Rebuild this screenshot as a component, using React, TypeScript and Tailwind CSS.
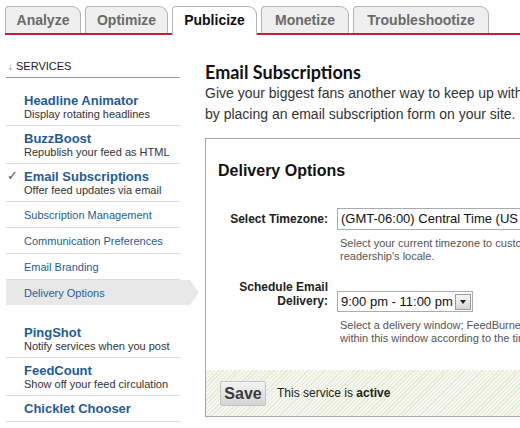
import React from "react";

type Tab = { label: string; width: string; active?: boolean };

const tabs: Tab[] = [
  { label: "Analyze", width: "w-[76px]" },
  { label: "Optimize", width: "w-[83px]" },
  { label: "Publicize", width: "w-[85px]", active: true },
  { label: "Monetize", width: "w-[88px]" },
  { label: "Troubleshootize", width: "w-[136px]" },
];

function TabBar() {
  return (
    <div className="ml-[5px] mt-[6px] flex items-end gap-[4px] border-b-2 border-[#cc1a3d]">
      {tabs.map((t) => (
        <div
          key={t.label}
          className={
            t.active
              ? `${t.width} -mb-[2px] flex h-[29px] items-center justify-center rounded-tl-[4px] rounded-tr-[9px] border border-b-0 border-[#b4b4b4] bg-white pb-[2px] text-[14px] font-bold text-[#111]`
              : `${t.width} flex h-[27px] items-center justify-center rounded-tl-[4px] rounded-tr-[9px] border border-b-0 border-[#b4b4b4] bg-[#efefef] text-[14px] font-bold text-[#6a6a6a]`
          }
        >
          {t.label}
        </div>
      ))}
    </div>
  );
}

function Service({
  title,
  desc,
  checked,
  last,
}: {
  title: string;
  desc?: string;
  checked?: boolean;
  last?: boolean;
}) {
  return (
    <div className={`relative pl-[18px] pt-[6px] pb-[5px] ${last ? "" : "border-b border-[#dcdcdc]"}`}>
      {checked && (
        <span className="absolute left-[1px] top-[5px] text-[13px] leading-[14px] text-[#555]">✓</span>
      )}
      <div className="text-[13px] font-bold leading-[14px] text-[#1f5b97]">{title}</div>
      {desc && <div className="text-[11px] leading-[12px] text-[#333]">{desc}</div>}
    </div>
  );
}

function SubLink({ label, active }: { label: string; active?: boolean }) {
  if (active) {
    return (
      <div className="w-[193px] bg-[#e8e8e8] pl-[18px] pt-[6px] pb-[5px] text-[11px] leading-[14px] text-[#2a5d93] [clip-path:polygon(0_0,calc(100%-9px)_0,100%_50%,calc(100%-9px)_100%,0_100%)]">
        {label}
      </div>
    );
  }
  return (
    <div className="border-b border-[#dcdcdc] pl-[18px] pt-[6px] pb-[5px] text-[11px] leading-[14px] text-[#2a5d93]">
      {label}
    </div>
  );
}

function Sidebar() {
  return (
    <div className="w-[200px] shrink-0 pl-[6px]">
      <div className="mt-[24px] w-[174px] border-b border-[#999] pb-[3px] pl-[2px] text-[11px] leading-[14px] text-[#1a1a1a]">
        <span className="mr-[3px] text-[10px] text-[#777]">↓</span>SERVICES
      </div>
      <div className="mt-[10px] w-[174px]">
        <Service title="Headline Animator" desc="Display rotating headlines" />
        <Service title="BuzzBoost" desc="Republish your feed as HTML" />
        <Service title="Email Subscriptions" desc="Offer feed updates via email" checked />
        <SubLink label="Subscription Management" />
        <SubLink label="Communication Preferences" />
        <SubLink label="Email Branding" />
      </div>
      <SubLink label="Delivery Options" active />
      <div className="mt-[15px] w-[174px]">
        <Service title="PingShot" desc="Notify services when you post" />
        <Service title="FeedCount" desc="Show off your feed circulation" />
        <Service title="Chicklet Chooser" />
      </div>
    </div>
  );
}

function DeliveryBox() {
  return (
    <div className="mt-[13px] w-[400px] border border-[#a8a8a8]">
      <div className="px-[12px] pt-[22px]">
        <h2 className="text-[16px] font-bold leading-[20px] text-[#111]">Delivery Options</h2>

        {/* timezone row */}
        <div className="mt-[27px] flex items-center gap-[9px]">
          <div className="w-[110px] shrink-0 text-right text-[12px] font-bold text-[#222]">Select Timezone:</div>
          <div className="flex h-[22px] w-[250px] items-center whitespace-nowrap border border-[#a5acb2] bg-white pl-[3px] text-[13px] text-[#111]">
            (GMT-06:00) Central Time (US &amp; Canada)
          </div>
        </div>
        <p className="ml-[122px] mt-[7px] whitespace-nowrap text-[11px] leading-[13px] text-[#555]">
          Select your current timezone to customize delivery to your
          <br />
          readership's locale.
        </p>

        {/* delivery window row */}
        <div className="mt-[17px] flex items-start gap-[9px]">
          <div className="w-[110px] shrink-0 text-right text-[12px] font-bold leading-[14px] text-[#222]">
            Schedule Email
            <br />
            Delivery:
          </div>
          <div className="mt-[11px] flex h-[21px] w-[136px] items-center justify-between whitespace-nowrap border border-[#a5acb2] bg-white pl-[3px] pr-[1px] text-[13px] text-[#111]">
            <span>9:00 pm - 11:00 pm</span>
            <span className="flex h-[16px] w-[16px] items-center justify-center border border-[#9a9a9a] bg-gradient-to-b from-[#f6f6f6] to-[#d6d6d6]">
              <span className="h-0 w-0 border-x-[3px] border-t-[4px] border-x-transparent border-t-[#222]" />
            </span>
          </div>
        </div>
        <p className="ml-[122px] mt-[7px] whitespace-nowrap text-[11px] leading-[13px] text-[#555]">
          Select a delivery window; FeedBurner will send your email
          <br />
          within this window according to the timezone above.
        </p>
      </div>

      {/* save footer */}
      <div className="mt-[25px] flex h-[46px] items-center gap-[11px] bg-[repeating-linear-gradient(135deg,#e3ead6_0px,#e3ead6_1px,#f5f7ee_1px,#f5f7ee_3px)] pl-[14px]">
        <button className="h-[25px] w-[46px] rounded-[2px] border border-[#c4c4c4] bg-gradient-to-b from-[#f4f4f4] to-[#d4d4d4] text-[16px] font-bold text-[#3a3a3a]">
          Save
        </button>
        <span className="text-[12px] text-[#222]">
          This service is <b>active</b>
        </span>
      </div>
    </div>
  );
}

export default function App() {
  return (
    <div className="h-[428px] w-[520px] overflow-hidden bg-white font-['Liberation_Sans',Arial,sans-serif]">
      <TabBar />
      <div className="flex">
        <Sidebar />
        <div className="ml-[5px] w-[400px] shrink-0">
          <h1 className="mt-[26px] font-['Lato',sans-serif] text-[18px] font-bold leading-[22px] text-[#111]">
            Email Subscriptions
          </h1>
          <p className="whitespace-nowrap text-[14px] leading-[21px] text-[#333]">
            Give your biggest fans another way to keep up with your feed
            <br />
            by placing an email subscription form on your site.
          </p>
          <DeliveryBox />
        </div>
      </div>
    </div>
  );
}
